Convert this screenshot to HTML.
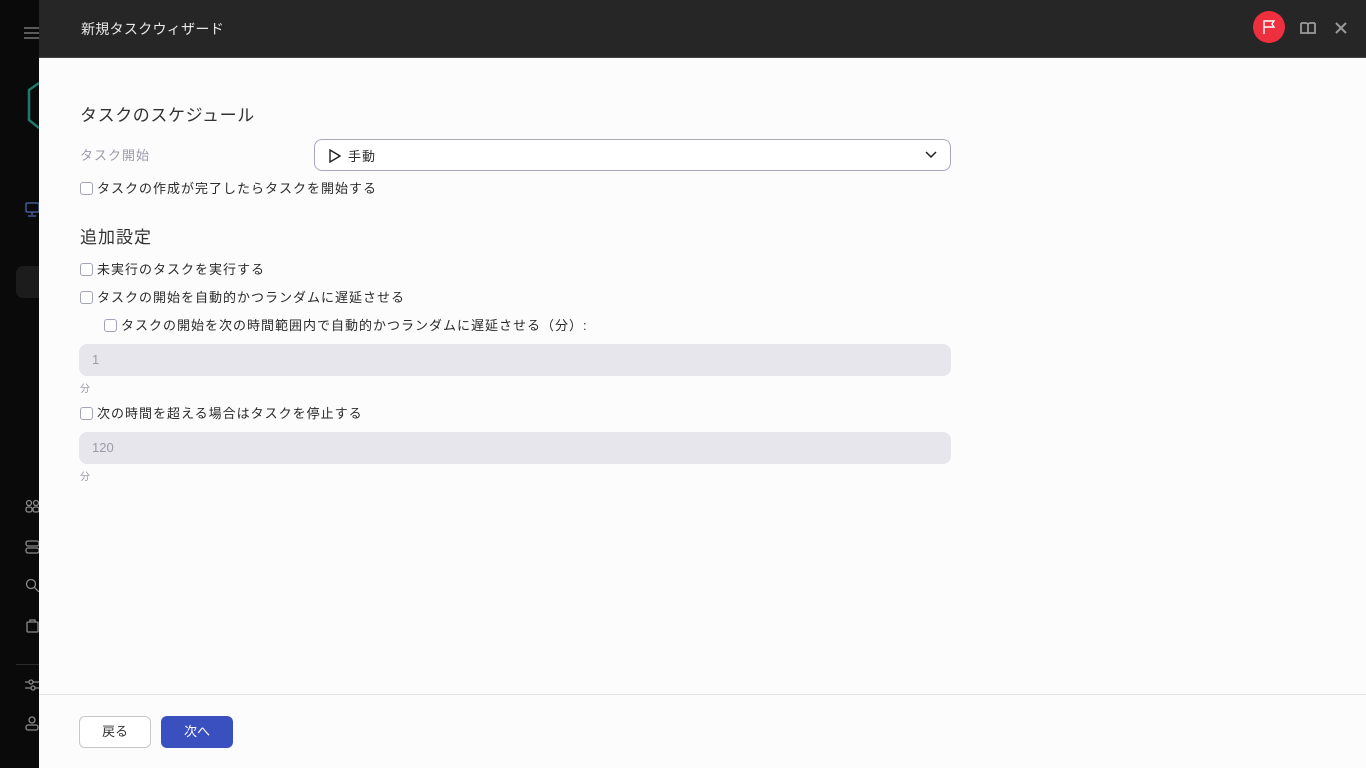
<!DOCTYPE html>
<html><head><meta charset="utf-8"><style>
*{box-sizing:border-box;margin:0;padding:0}
body{width:1366px;height:768px;overflow:hidden;background:#0a0a0a;font-family:"Liberation Sans","Noto Sans CJK JP",sans-serif;position:relative}
.side{position:absolute;left:0;top:0;width:39px;height:768px;background:#0a0a0a}
.ic{position:absolute;stroke:#8a8a8a;fill:none;stroke-width:1.3}
.panel{position:absolute;left:39px;top:0;width:1327px;height:768px;background:#fcfcfd}
.hdr{height:58px;background:#262626;border-bottom:1px solid #444;position:relative}
.hdr .t{position:absolute;left:42px;top:19px;color:#e8e8e8;font-size:14px;letter-spacing:0.3px}
.abs{position:absolute}
.txt{font-size:13px;color:#2a2a2a;white-space:nowrap;letter-spacing:1px}
.cb{position:absolute;width:13px;height:13px;border:1px solid #a4a4b8;border-radius:3px;background:#fff}
.inp{position:absolute;left:40px;width:872px;height:32px;border-radius:8px;background:#e6e6ec;color:#9a9aaa;font-size:13px;padding:8px 13px}
.small{position:absolute;left:41px;font-size:10px;color:#9a9aaa}
</style></head><body>
<div class="side">
<svg class="ic" style="left:24px;top:26px" width="16" height="14"><path d="M0 2h16M0 7h16M0 12h16"/></svg>
<svg class="ic" style="left:26px;top:82px;stroke:#1e7a6a;stroke-width:2.5" width="14" height="48"><path d="M13 1L3 8v30l10 8"/></svg>
<svg class="ic" style="left:25px;top:202px;stroke:#4a6aae" width="14" height="16"><rect x="1" y="1" width="13" height="9" rx="1"/><path d="M7 10v3M3 14h8"/></svg>
<div style="position:absolute;left:16px;top:266px;width:30px;height:32px;border-radius:7px;background:#1c1c1c"></div>
<svg class="ic" style="left:25px;top:499px" width="14" height="14"><circle cx="4" cy="4" r="2.5"/><circle cx="11" cy="4" r="2.5"/><rect x="1" y="8" width="6" height="5" rx="2"/><rect x="8" y="8" width="6" height="5" rx="2"/></svg>
<svg class="ic" style="left:25px;top:540px" width="14" height="14"><rect x="1" y="1" width="13" height="5" rx="2"/><rect x="1" y="8" width="13" height="5" rx="2"/></svg>
<svg class="ic" style="left:25px;top:578px" width="14" height="14"><circle cx="6" cy="6" r="4.5"/><path d="M9 9l5 5"/></svg>
<svg class="ic" style="left:25px;top:618px" width="14" height="16"><rect x="2" y="4" width="11" height="10" rx="1"/><path d="M5 4V2h5v2"/></svg>
<div style="position:absolute;left:16px;top:664px;width:23px;height:1px;background:#2a2a2a"></div>
<svg class="ic" style="left:25px;top:677px" width="14" height="16"><path d="M0 5h14M0 11h14"/><circle cx="6" cy="5" r="2" fill="#0a0a0a"/><circle cx="8" cy="11" r="2" fill="#0a0a0a"/></svg>
<svg class="ic" style="left:25px;top:716px" width="14" height="16"><circle cx="7" cy="4" r="3"/><rect x="1" y="9" width="12" height="5" rx="2"/></svg>
</div>
<div class="panel">
<div class="hdr"><div class="t">新規タスクウィザード</div>
<div class="abs" style="left:1214px;top:11px;width:32px;height:32px;border-radius:50%;background:#ee2f3e"></div>
<svg class="abs" style="left:1222px;top:19px" width="16" height="16" fill="none" stroke="#fff" stroke-width="1.4"><path d="M3 15V2h10l-2 3 2 3H3"/></svg>
<svg class="abs" style="left:1261px;top:21px" width="16" height="14" fill="none" stroke="#9a9a9a" stroke-width="1.8"><path d="M1 2h5c1 0 2 1 2 2v9M15 2h-5c-1 0-2 1-2 2M1 2v10h14V2"/></svg>
<svg class="abs" style="left:1296px;top:22px" width="12" height="12" stroke="#9a9a9a" stroke-width="2"><path d="M1 1l10 10M11 1L1 11"/></svg>
</div>
<div class="abs txt" style="left:41px;top:101px;font-size:17px;color:#333;letter-spacing:0.6px">タスクのスケジュール</div>
<div class="abs txt" style="left:41px;top:145px;color:#9a9aaa">タスク開始</div>
<div class="abs" style="left:275px;top:139px;width:637px;height:32px;border:1px solid #a8a8bc;border-radius:8px;background:#fff"></div>
<svg class="abs" style="left:290px;top:149px" width="12" height="14" fill="none" stroke="#222" stroke-width="1.4"><path d="M1 1l10 6-10 6z"/></svg>
<div class="abs txt" style="left:309px;top:146px">手動</div>
<svg class="abs" style="left:886px;top:151px" width="12" height="8" fill="none" stroke="#222" stroke-width="1.5"><path d="M1 1l5 5 5-5"/></svg>
<div class="cb" style="left:41px;top:182px"></div><div class="abs txt" style="left:58px;top:178px">タスクの作成が完了したらタスクを開始する</div>
<div class="abs txt" style="left:41px;top:223px;font-size:17px;color:#333">追加設定</div>
<div class="cb" style="left:41px;top:263px"></div><div class="abs txt" style="left:58px;top:259px">未実行のタスクを実行する</div>
<div class="cb" style="left:41px;top:291px"></div><div class="abs txt" style="left:58px;top:287px">タスクの開始を自動的かつランダムに遅延させる</div>
<div class="cb" style="left:65px;top:319px"></div><div class="abs txt" style="left:82px;top:315px">タスクの開始を次の時間範囲内で自動的かつランダムに遅延させる（分）:</div>
<div class="inp" style="top:344px">1</div>
<div class="small" style="top:380px">分</div>
<div class="cb" style="left:41px;top:407px"></div><div class="abs txt" style="left:58px;top:403px">次の時間を超える場合はタスクを停止する</div>
<div class="inp" style="top:432px">120</div>
<div class="small" style="top:468px">分</div>
<div class="abs" style="left:0;top:694px;width:1327px;height:1px;background:#e4e4e8"></div>
<div class="abs" style="left:40px;top:716px;width:72px;height:32px;border:1px solid #c8c8cc;border-radius:6px;background:#fff;font-size:13px;color:#333;text-align:center;line-height:30px">戻る</div>
<div class="abs" style="left:122px;top:716px;width:72px;height:32px;border-radius:6px;background:#3a50bf;font-size:13px;color:#fff;text-align:center;line-height:32px">次へ</div>
</div>
</body></html>
